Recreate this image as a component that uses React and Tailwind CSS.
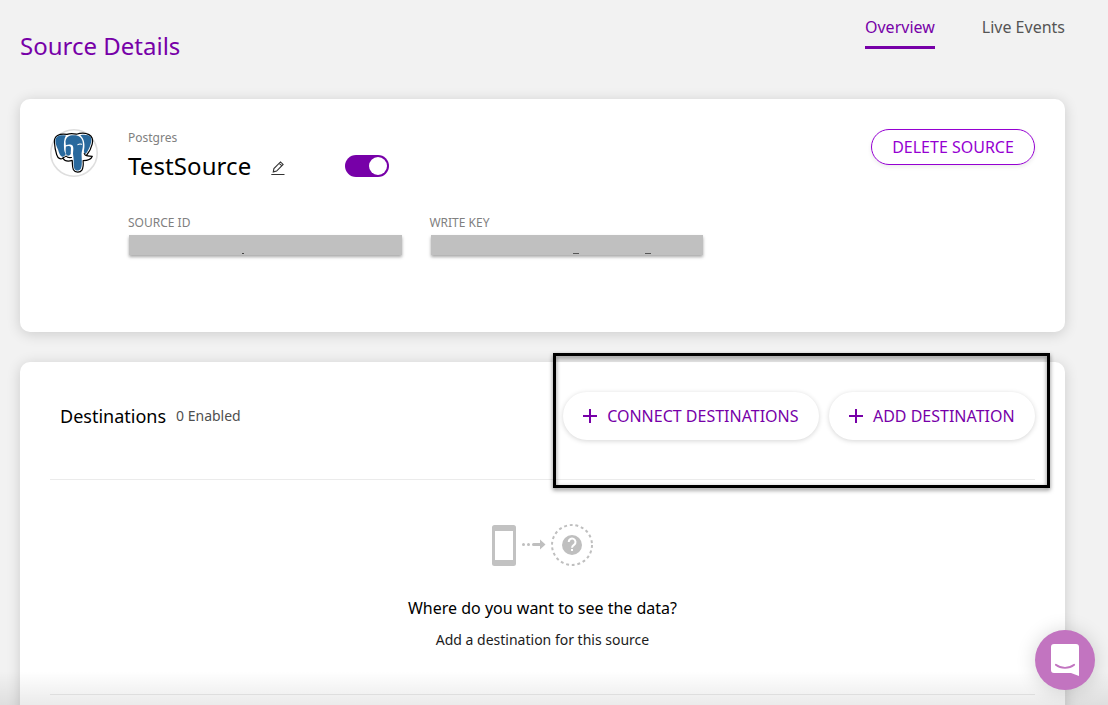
function ElephantLogo() {
  return (
    <svg className="h-12 w-12 shrink-0" viewBox="0 0 48 48">
      <circle cx="24" cy="24" r="23.2" fill="#fff" stroke="#dedede" strokeWidth="1.6" />
      <g strokeLinejoin="round" strokeLinecap="round">
        <path
          d="M4.400 13C4 7 9 4.200 17 5.400c2.500-.9 6-.9 9.500-.2 4-1.400 9-1.500 12.500.4 3.500 2 4.200 5.400 3.200 9.500-1 4.300-3.200 8.300-5.800 11.400 1.600.7 3.600.4 5.900.8-1 2.700-4.500 4.400-9.200 4.400.4 4 .1 7-1.200 9.400-1.600 2.600-6.700 2.900-8.500-.4-1.400-2.600-.8-6.200-1.200-9.300-3.500 1.100-7.600.6-9.200-2.200-2.600 1.400-5 .3-6.300-3.500C5.200 21 4.600 17 4.400 13z"
          fill="#fff" stroke="#000" strokeWidth="1.200"
        />
        <path d="M5.400 12c.2-5.600 5-6.500 10.600-5.500-2.200 3.500-2.200 8-2 12 .1 3.200.7 4.800 1.800 6.600-.8 1.800-2.500 3.200-3.800 2.600-1.800-.8-2.900-3.400-3.900-7C6.600 17.600 5.500 15 5.400 12z" fill="#29699d" />
        <path d="M15.500 12.500c.5-4.900 4-6.500 8.500-6.300 4.700-.1 8 2.300 8.700 6.800.4 3 .2 5.500-.5 8-.5 2-.7 3.400-.6 5.400.2 4.800.7 10.500-.8 13.300-1.500 2.500-5.500 2.400-6.500-.3-1-3-.4-7.300-.8-10.900-.2-2-.7-3.500-.4-5.500.3-2.800.5-5-.6-6.400-1.300-1.300-4-1.300-6.700-.4z" fill="#29699d" />
        <path d="M30.300 6.200c4-.9 9.200-.5 10.700 2.200 1.500 3.500-1.600 11.800-5.400 16.600-1-.7-1.700-1.800-1.700-3C35 17 35 10.500 30.300 6.200z" fill="#29699d" />
        <path d="M15.900 17.400c1.700-.8 4.100-.7 4.900.6.5 2-.2 4.500 0 6.800-.7 2-3.200 2.600-4.400.9-1-2-.8-5.200-.5-8.300z" fill="#29699d" />
        <path d="M31.600 15.300c-1.300-.6-2.600-.4-3.700.3" fill="none" stroke="#fff" strokeWidth="1.100" />
        <path d="M13 28.600c1.100.2 2-.4 3-1.600 1.300 1.600 3.200 1.900 5.500 1.500M34.200 24.400c.3 1.200 1 1.900 2.200 2.200" fill="none" stroke="#000" strokeWidth="1.100" />
      </g>
    </svg>
  );
}

function PencilIcon() {
  return (
    <svg className="ml-5 mt-1 h-4 w-[14px]" viewBox="0 0 14 16" fill="none" stroke="#333">
      <path d="M2.300 11.900l.6-3.400L9.500 1.900l2.600 2.500-6.500 6.700z M8.200 3.300l2.500 2.400" strokeWidth="1.100" />
      <path d="M.3 14.500h13.200" strokeWidth="1" />
    </svg>
  );
}

function Plus() {
  return (
    <svg className="h-[14px] w-[14px]" viewBox="0 0 14 14">
      <path d="M7 0v14M0 7h14" stroke="#7700a8" strokeWidth="2" />
    </svg>
  );
}

function PillButton({ children }) {
  return (
    <button className="flex h-12 items-center gap-[10px] whitespace-nowrap rounded-full bg-white pl-5 pr-[20.400px] text-base text-[#7700a8] shadow-[0_1px_5px_rgba(0,0,0,0.17)]">
      <Plus />
      {children}
    </button>
  );
}

function Field({ label, children }) {
  return (
    <div className="w-[301.400px]">
      <div className="text-xs leading-4 text-[#808080]">{label}</div>
      <div className="ml-[1.400px] mt-[4px] h-5 w-[272.500px] bg-[#c0c0c0] shadow-[0_2px_3px_rgba(0,0,0,0.35)]">
        <svg className="h-5 w-[272px]" viewBox="0 0 272 20">{children}</svg>
      </div>
    </div>
  );
}

function EmptyIllustration() {
  return (
    <svg className="h-[44px] w-[104px]" viewBox="0 0 104 44">
      <path fillRule="evenodd" fill="#c2c2c2" d="M3.500 2h19a2.500 2.500 0 0 1 2.500 2.500v36a2.500 2.500 0 0 1-2.500 2.500h-19a2.500 2.500 0 0 1-2.500-2.500v-36a2.500 2.500 0 0 1 2.500-2.500zM4 8v29h18v-29z" />
      <circle cx="32.500" cy="21.500" r="1.500" fill="#bfbfbf" />
      <circle cx="37.500" cy="21.500" r="1.500" fill="#bfbfbf" />
      <path d="M42.500 20h6.500v-3.500l5.500 5-5.500 5V23h-6.500a1.500 1.500 0 0 1 0-3z" fill="#bfbfbf" />
      <circle cx="81" cy="22" r="20" fill="none" stroke="#bfbfbf" strokeWidth="2" strokeDasharray="2.900 2.810" />
      <circle cx="81" cy="22" r="10" fill="#bfbfbf" />
      <path d="M77.700 19a3.400 3.400 0 1 1 5.500 2.600c-1.400 1-2.200 1.600-2.200 3.200" fill="none" stroke="#fff" strokeWidth="2" />
      <path d="M80 26h2v2h-2z" fill="#fff" />
    </svg>
  );
}

export default function App() {
  return (
    <div className="relative h-[705px] w-[1108px] overflow-hidden bg-[#f2f2f2] pl-5 pr-[43px] font-['Noto_Sans',sans-serif] text-black">
      <header className="flex h-[99px] items-start justify-between">
        <h1 className="mt-[30px] text-2xl leading-8 text-[#7700a8]">Source Details</h1>
        <nav className="flex gap-[47px] pt-[15px] text-base leading-6">
          <div className="h-[34px] border-b-[3px] border-[#7700a8] text-[#7700a8]">Overview</div>
          <div className="text-[#555]">Live Events</div>
        </nav>
      </header>

      <section className="flex h-[233px] items-start rounded-[10px] bg-white px-[30px] pt-[30px] shadow-[0_2px_14px_rgba(0,0,0,0.16)]">
        <ElephantLogo />
        <div className="ml-[30px] flex-1">
          <div className="mt-px text-xs leading-4 text-[#808080]">Postgres</div>
          <div className="mt-[2px] flex h-9 items-center">
            <span className="text-2xl leading-9 tracking-[0.1px]">TestSource</span>
            <PencilIcon />
            <div className="ml-[60px] flex h-[22px] w-11 items-center justify-end rounded-full bg-[#7700a8] pr-[2px]">
              <div className="h-[18px] w-[18px] rounded-full bg-white" />
            </div>
          </div>
          <div className="mt-[31px] flex">
            <Field label="SOURCE ID">
              <path d="M113 18.500h2" stroke="#444" strokeWidth="1" />
            </Field>
            <Field label="WRITE KEY">
              <path d="M142 18.500h6M214 18.500h6" stroke="#555" strokeWidth="1" />
            </Field>
          </div>
        </div>
        <button className="h-9 w-[164px] rounded-full border border-[#9500d2] text-base leading-6 text-[#9500d2] shadow-[0_2px_4px_rgba(0,0,0,0.08)]">DELETE SOURCE</button>
      </section>

      <section className="mt-[30px] h-[420px] rounded-[10px] bg-white px-[30px] shadow-[0_2px_14px_rgba(0,0,0,0.16)]">
        <div className="flex h-[118px] items-start border-b border-[#ebebeb] pt-[30px]">
          <div className="flex h-12 flex-1 items-center gap-[10px] pl-[10px]">
            <h2 className="text-lg leading-6">Destinations</h2>
            <span className="text-sm leading-5 text-[#4f4f4f]">0 Enabled</span>
          </div>
          <div className="flex gap-[10px]">
            <PillButton>CONNECT DESTINATIONS</PillButton>
            <PillButton>ADD DESTINATION</PillButton>
          </div>
        </div>
        <div className="flex h-[215px] flex-col items-center border-b border-[#ebebeb] pt-[43px]">
          <EmptyIllustration />
          <div className="mt-[29px] text-base leading-6">Where do you want to see the data?</div>
          <div className="mt-[10px] text-sm leading-5 text-[#1c1c1c]">Add a destination for this source</div>
        </div>
      </section>

      <div className="pointer-events-none absolute inset-x-0 bottom-0 h-[34px] bg-gradient-to-b from-transparent to-black/8" />
      <div className="pointer-events-none absolute left-[553px] top-[353px] h-[135px] w-[497px] border-[3px] border-black drop-shadow-[0_2px_2px_rgba(0,0,0,0.5)]" />
      <button className="absolute left-[1035px] top-[630px] flex h-[60px] w-[60px] items-center justify-center rounded-full bg-[#c274c0] shadow-[0_1px_20px_rgba(0,0,0,0.16)]">
        <svg className="h-8 w-7" viewBox="0 0 28 32">
          <path d="M3 0h22a3 3 0 0 1 3 3v29l-8-3H3a3 3 0 0 1-3-3V3a3 3 0 0 1 3-3z" fill="#fff" />
          <path d="M4.800 20.800c5.200 4 13.200 4 18.400 0" fill="none" stroke="#c274c0" strokeWidth="1.800" strokeLinecap="round" />
        </svg>
      </button>
    </div>
  );
}
